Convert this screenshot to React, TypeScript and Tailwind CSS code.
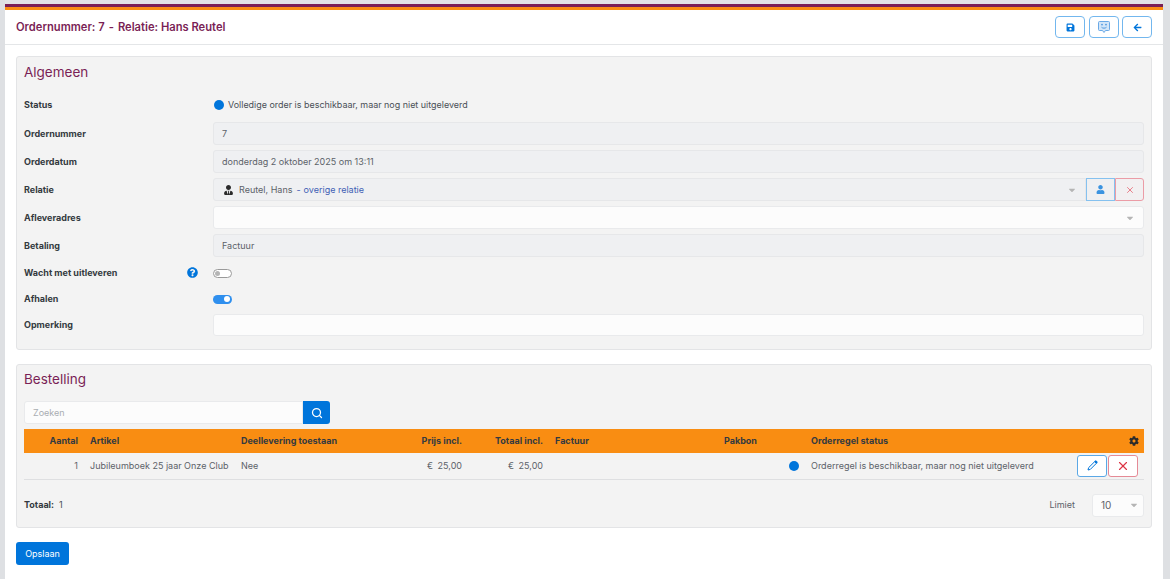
import React from 'react';
import { FaSave, FaUser, FaUserTie, FaCog, FaQuestionCircle, FaCaretDown, FaArrowLeft } from 'react-icons/fa';
import { LuSearch, LuX } from 'react-icons/lu';

const labelClass = 'w-[189px] shrink-0 text-[9px] font-bold text-[#343a40]';
const disabledInput =
  'flex-1 h-[23px] flex items-center px-[8px] rounded-[3px] border border-[#e6e7e9] bg-[#eff0f2] text-[9px] text-[#5c6269]';
const whiteInput = 'flex-1 flex items-center px-[9px] rounded-[3px] border border-[#e9eaec] bg-[#fcfcfc]';

const Row: React.FC<{ label: string; children: React.ReactNode; className?: string; help?: boolean }> = ({
  label,
  children,
  className = 'h-[23px]',
  help,
}) => (
  <div className={`flex items-center ${className}`}>
    <div className={`${labelClass} relative`}>
      {label}
      {help && <FaQuestionCircle className="absolute right-[15px] top-[1px] text-[11px] text-[#0075db]" />}
    </div>
    {children}
  </div>
);

const HeaderButton: React.FC<{ children: React.ReactNode }> = ({ children }) => (
  <button className="w-[30px] h-[22px] flex items-center justify-center rounded-[4px] border border-[#73b7ee] text-[#0075db] bg-white">
    {children}
  </button>
);

const Toggle: React.FC<{ on?: boolean }> = ({ on }) =>
  on ? (
    <div className="w-[19px] h-[9px] rounded-full bg-[#2f8fee] flex items-center justify-end pr-[2px]">
      <div className="w-[6px] h-[6px] rounded-full bg-white" />
    </div>
  ) : (
    <div className="w-[19px] h-[9px] rounded-full border border-[#9a9a9a] bg-white flex items-center pl-[1px]">
      <div className="w-[5px] h-[5px] rounded-full bg-[#b5b5b5]" />
    </div>
  );

// speech bubble with a small face, lighter than the other header icons
const BubbleIcon = () => (
  <svg width="12" height="13" viewBox="0 0 12 13">
    <path d="M1.5 .5h9a1 1 0 0 1 1 1v7a1 1 0 0 1-1 1H7.5L6 11.5 4.5 9.5h-3a1 1 0 0 1-1-1v-7a1 1 0 0 1 1-1z" fill="#d3e6f8" stroke="#6aa9e6" />
    <circle cx="4" cy="3.6" r=".9" fill="#4f98e0" />
    <circle cx="8" cy="3.6" r=".9" fill="#4f98e0" />
    <path d="M3.5 6.2c1.2 1.3 3.8 1.3 5 0" fill="none" stroke="#4f98e0" />
  </svg>
);

// outlined pencil with a filled top end
const PencilIcon = () => (
  <svg width="11" height="11" viewBox="0 0 11 11">
    <path d="M7.3 2 1.6 7.7 1 10l2.3-.6L9 3.7" fill="none" stroke="#0075db" strokeWidth="1" strokeLinejoin="round" />
    <path d="M7 1.7 8 .7a1 1 0 0 1 1.4 0l.9.9a1 1 0 0 1 0 1.4l-1 1z" fill="#0075db" />
  </svg>
);

const th = 'px-[6px] font-bold text-[9px] text-[#343a40]';
const td = 'px-[6px] text-[9px] text-[#5c6269]';

export default function App() {
  return (
    <div className="flex h-[579px] overflow-hidden bg-white font-['Inter',sans-serif]">
      <div className="w-[5px] shrink-0 bg-[#dee0e3]" />
      <div className="flex-1 flex flex-col min-w-0">
        <div className="h-[4px] bg-[#e2e3e5]" />
        <div className="h-[3px] bg-[#7a1f56]" />
        <div className="h-[3px] bg-[#f98d12]" />
        <header className="h-[35px] shrink-0 flex items-center justify-between px-[11px] border-b border-[#e4e6e8]">
          <h1 className="flex text-[11.2px] font-semibold text-[#7a1f56]">
            <span>Ordernummer: 7</span>
            <span className="mx-[4px]">-</span>
            <span>Relatie: Hans Reutel</span>
          </h1>
          <div className="flex gap-[3.5px]">
            <HeaderButton><FaSave className="text-[9px]" /></HeaderButton>
            <HeaderButton><BubbleIcon /></HeaderButton>
            <HeaderButton><FaArrowLeft className="text-[9px]" /></HeaderButton>
          </div>
        </header>

        <main className="flex-1 px-[11px] pt-[11px]">
          <section className="h-[294px] rounded-[3px] border border-[#e3e4e6] bg-[#f3f3f3] px-[7px] pt-[6px]">
            <h2 className="text-[13.5px] leading-[18px] text-[#7a1f56] mb-[12px]">Algemeen</h2>
            <div className="flex flex-col gap-[5px]">
              <Row label="Status" className="h-[24px]">
                <div className="flex items-center gap-[4px] text-[8.95px] text-[#494f56] pl-[1px]">
                  <span className="w-[10px] h-[10px] rounded-full bg-[#0075db]" />
                  Volledige order is beschikbaar, maar nog niet uitgeleverd
                </div>
              </Row>
              <Row label="Ordernummer"><div className={disabledInput}>7</div></Row>
              <Row label="Orderdatum"><div className={disabledInput}>donderdag 2 oktober 2025 om 13:11</div></Row>
              <Row label="Relatie">
                <div className="flex-1 flex h-[23px]">
                  <div className="flex-1 flex items-center pl-[10px] pr-[8px] rounded-l-[3px] border border-[#e6e7e9] bg-[#eff0f2] text-[9px] text-[#5c6269]">
                    <FaUserTie className="w-[9px] h-[10px] text-[#2b2b2b] mr-[6px]" />
                    Reutel, Hans
                    <span className="text-[#3f5fb5] ml-[4px] mr-[3px]">-</span>
                    <span className="text-[#3f5fb5]">overige relatie</span>
                    <FaCaretDown className="ml-auto text-[10px] text-[#b5b5b5]" />
                  </div>
                  <div className="w-[29px] flex items-center justify-center border border-[#85c1ef] bg-[#eff0f2]">
                    <FaUser className="text-[9px] text-[#3a93e0]" />
                  </div>
                  <div className="w-[29px] flex items-center justify-center rounded-r-[3px] border border-[#eb9ca6] bg-[#f2f0f1]">
                    <LuX className="text-[10px] text-[#e66a76]" />
                  </div>
                </div>
              </Row>
              <Row label="Afleveradres">
                <div className={`${whiteInput} h-[23px]`}>
                  <FaCaretDown className="ml-auto mr-[-1px] text-[10px] text-[#b5b5b5]" />
                </div>
              </Row>
              <Row label="Betaling"><div className={disabledInput}>Factuur</div></Row>
              <Row label="Wacht met uitleveren" className="h-[22px]" help><Toggle /></Row>
              <Row label="Afhalen" className="h-[20px]"><Toggle on /></Row>
              <Row label="Opmerking" className="h-[22px]"><div className={`${whiteInput} h-[22px]`} /></Row>
            </div>
          </section>

          <section className="mt-[14px] h-[164px] rounded-[3px] border border-[#e3e4e6] bg-[#f3f3f3] px-[7px] pt-[5px]">
            <h2 className="text-[13.5px] leading-[18px] text-[#7a1f56] mb-[13px]">Bestelling</h2>
            <div className="flex h-[23px] w-[306px]">
              <div className="flex-1 flex items-center px-[8px] rounded-l-[3px] border border-[#e9eaec] bg-[#fcfcfc] text-[9px] text-[#a9adb2]">
                Zoeken
              </div>
              <button className="w-[27px] flex items-center justify-center rounded-r-[3px] bg-[#0075db] text-white">
                <LuSearch className="text-[12px]" strokeWidth={2.5} />
              </button>
            </div>
            <table className="mt-[5px] w-full table-fixed border-collapse">
              <colgroup>
                <col className="w-[60px]" />
                <col className="w-[151px]" />
                <col className="w-[155px]" />
                <col className="w-[78px]" />
                <col className="w-[81px]" />
                <col className="w-[169px]" />
                <col className="w-[65px]" />
                <col className="w-[22px]" />
                <col />
              </colgroup>
              <thead>
                <tr className="h-[24px] bg-[#f98d12]">
                  <th className={`${th} text-right`}>Aantal</th>
                  <th className={`${th} text-left`}>Artikel</th>
                  <th className={`${th} text-left`}>Deellevering toestaan</th>
                  <th className={`${th} text-right`}>Prijs incl.</th>
                  <th className={`${th} text-right`}>Totaal incl.</th>
                  <th className={`${th} text-left`}>Factuur</th>
                  <th className={`${th} text-left`}>Pakbon</th>
                  <th />
                  <th className={`${th} text-left`}>
                    <div className="flex items-center justify-between">
                      Orderregel status
                      <FaCog className="text-[10px] text-[#2b2b2b] mr-[-1px]" />
                    </div>
                  </th>
                </tr>
              </thead>
              <tbody>
                <tr className="h-[26px] border-b border-[#dedfe1]">
                  <td className={`${td} text-right`}>1</td>
                  <td className={td}>Jubileumboek 25 jaar Onze Club</td>
                  <td className={td}>Nee</td>
                  <td className={`${td} text-right [word-spacing:2px]`}>€ 25,00</td>
                  <td className={`${td} text-right [word-spacing:2px]`}>€ 25,00</td>
                  <td className={td} />
                  <td className={td} />
                  <td className="p-0">
                    <span className="block w-[10px] h-[10px] rounded-full bg-[#0075db] ml-[6px]" />
                  </td>
                  <td className={td}>
                    <div className="flex items-center justify-between">
                      Orderregel is beschikbaar, maar nog niet uitgeleverd
                      <div className="flex gap-[1px]">
                        <button className="w-[30px] h-[22px] flex items-center justify-center rounded-[3px] border border-[#5ba8e6] bg-white">
                          <PencilIcon />
                        </button>
                        <button className="w-[30px] h-[22px] flex items-center justify-center rounded-[3px] border border-[#e58a96] bg-white text-[#dc3545]">
                          <LuX className="text-[14px]" />
                        </button>
                      </div>
                    </div>
                  </td>
                </tr>
              </tbody>
            </table>
            <div className="mt-[14px] flex items-center justify-between h-[23px] text-[9px]">
              <div className="text-[#494f56]">
                <span className="font-bold text-[#343a40]">Totaal:</span>
                <span className="ml-[5px]">1</span>
              </div>
              <div className="flex items-center gap-[17px] text-[#5c6269]">
                Limiet
                <div className="w-[52px] h-[23px] flex items-center justify-between pl-[8px] pr-[4px] rounded-[3px] border border-[#e9eaec] bg-[#fcfcfc] text-[10px]">
                  10
                  <FaCaretDown className="text-[10px] text-[#b5b5b5]" />
                </div>
              </div>
            </div>
          </section>

          <button className="block mt-[14px] w-[53px] h-[23px] rounded-[3px] bg-[#0075db] text-white text-[9px]">Opslaan</button>
        </main>
      </div>
      <div className="w-[7px] shrink-0 bg-[#dee0e3]" />
    </div>
  );
}
